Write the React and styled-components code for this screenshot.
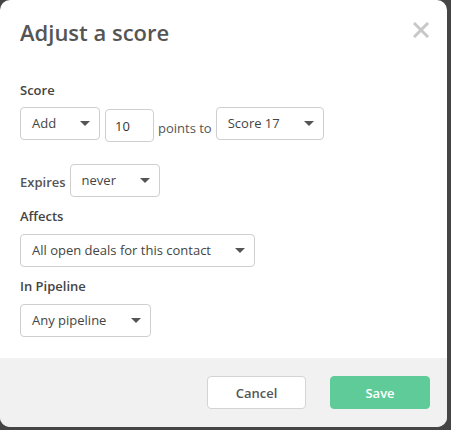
import React from 'react';
import styled, { createGlobalStyle } from 'styled-components';

const GlobalStyle = createGlobalStyle`
  html, body {
    margin: 0;
    padding: 0;
    background: #454545;
    font-family: "Open Sans", "Liberation Sans", sans-serif;
  }
`;

const Modal = styled.div`
  width: 447px;
  height: 427px;
  background: #fff;
  border-radius: 10px;
  overflow: hidden;
  display: flex;
  flex-direction: column;
`;

const Header = styled.div`
  display: flex;
  justify-content: space-between;
  align-items: flex-start;
  padding: 17px 18px 0 20px;
  height: 65px;
  box-sizing: border-box;
`;

const Title = styled.h1`
  margin: 0;
  font-size: 22px;
  line-height: 30px;
  font-weight: 600;
  color: #555;
`;

const Close = styled.button`
  border: 0;
  background: none;
  padding: 0;
  margin-top: 5px;
  width: 16px;
  height: 16px;
  cursor: pointer;
  display: flex;
`;

const Body = styled.div`
  flex: 1;
  padding: 16px 20px 0 20px;
  display: flex;
  flex-direction: column;
`;

const Label = styled.div`
  font-size: 13px;
  line-height: 18px;
  font-weight: 600;
  color: #444;
  margin-bottom: ${p => p.gap || 9}px;
`;

const Row = styled.div`
  display: flex;
  align-items: ${p => p.align || 'flex-start'};
  gap: 4px;
  margin-bottom: ${p => p.mb || 0}px;
`;

const SelectBox = styled.div`
  width: ${p => p.w}px;
  height: 33px;
  box-sizing: border-box;
  border: 1px solid #cfcfcf;
  border-radius: 4px;
  display: flex;
  align-items: center;
  justify-content: space-between;
  padding: 0 9px 1px 11px;
  font-size: 13px;
  color: #444;
  background: #fff;
`;

const Caret = styled.span`
  width: 0;
  height: 0;
  border-left: 5px solid transparent;
  border-right: 5px solid transparent;
  border-top: 5px solid #555;
  margin-top: 1px;
`;

const NumberInput = styled.div`
  width: 49px;
  height: 33px;
  margin: 2px 0 0 1px;
  box-sizing: border-box;
  border: 1px solid #cfcfcf;
  border-radius: 4px;
  display: flex;
  align-items: center;
  padding-left: 9px;
  font-size: 13px;
  color: #333;
`;

const Inline = styled.span`
  font-size: 13px;
  color: #555;
  line-height: 18px;
  padding-bottom: ${p => p.pb || 0}px;
  font-weight: ${p => p.bold ? 600 : 400};
`;

const Footer = styled.div`
  height: 69px;
  background: #f1f1f1;
  display: flex;
  justify-content: flex-end;
  align-items: flex-start;
  gap: 24px;
  padding: 18px 17px 0 0;
  box-sizing: border-box;
`;

const Button = styled.button`
  width: ${p => p.w || 99}px;
  height: 33px;
  border-radius: 4px;
  font-family: inherit;
  font-size: 13px;
  font-weight: 600;
  border: 1px solid ${p => p.primary ? '#5fcb98' : '#d4d4d4'};
  background: ${p => p.primary ? '#5fcb98' : '#fff'};
  color: ${p => p.primary ? '#fff' : '#555'};
  cursor: pointer;
`;

function Select({ w, value }) {
  return (
    <SelectBox w={w}>
      <span>{value}</span>
      <Caret />
    </SelectBox>
  );
}

export default function App() {
  return (
    <>
      <GlobalStyle />
      <Modal>
        <Header>
          <Title>Adjust a score</Title>
          <Close aria-label="Close">
            <svg width="16" height="16" viewBox="0 0 16 16">
              <path d="M2 2L14 14M14 2L2 14" stroke="#c8c8c8" strokeWidth="3" strokeLinecap="square" />
            </svg>
          </Close>
        </Header>
        <Body>
          <Label gap={8}>Score</Label>
          <Row mb={22}>
            <Select w={80} value="Add" />
            <NumberInput>10</NumberInput>
            <Inline style={{ alignSelf: 'center', marginTop: 6 }}>points to</Inline>
            <Select w={108} value="Score 17" />
          </Row>
          <Row align="flex-end" mb={10}>
            <Inline bold pb={6}>Expires</Inline>
            <Select w={90} value="never" />
          </Row>
          <Label>Affects</Label>
          <Row mb={10}>
            <Select w={235} value="All open deals for this contact" />
          </Row>
          <Label>In Pipeline</Label>
          <Row>
            <Select w={131} value="Any pipeline" />
          </Row>
        </Body>
        <Footer>
          <Button>Cancel</Button>
          <Button primary w={100}>Save</Button>
        </Footer>
      </Modal>
    </>
  );
}
